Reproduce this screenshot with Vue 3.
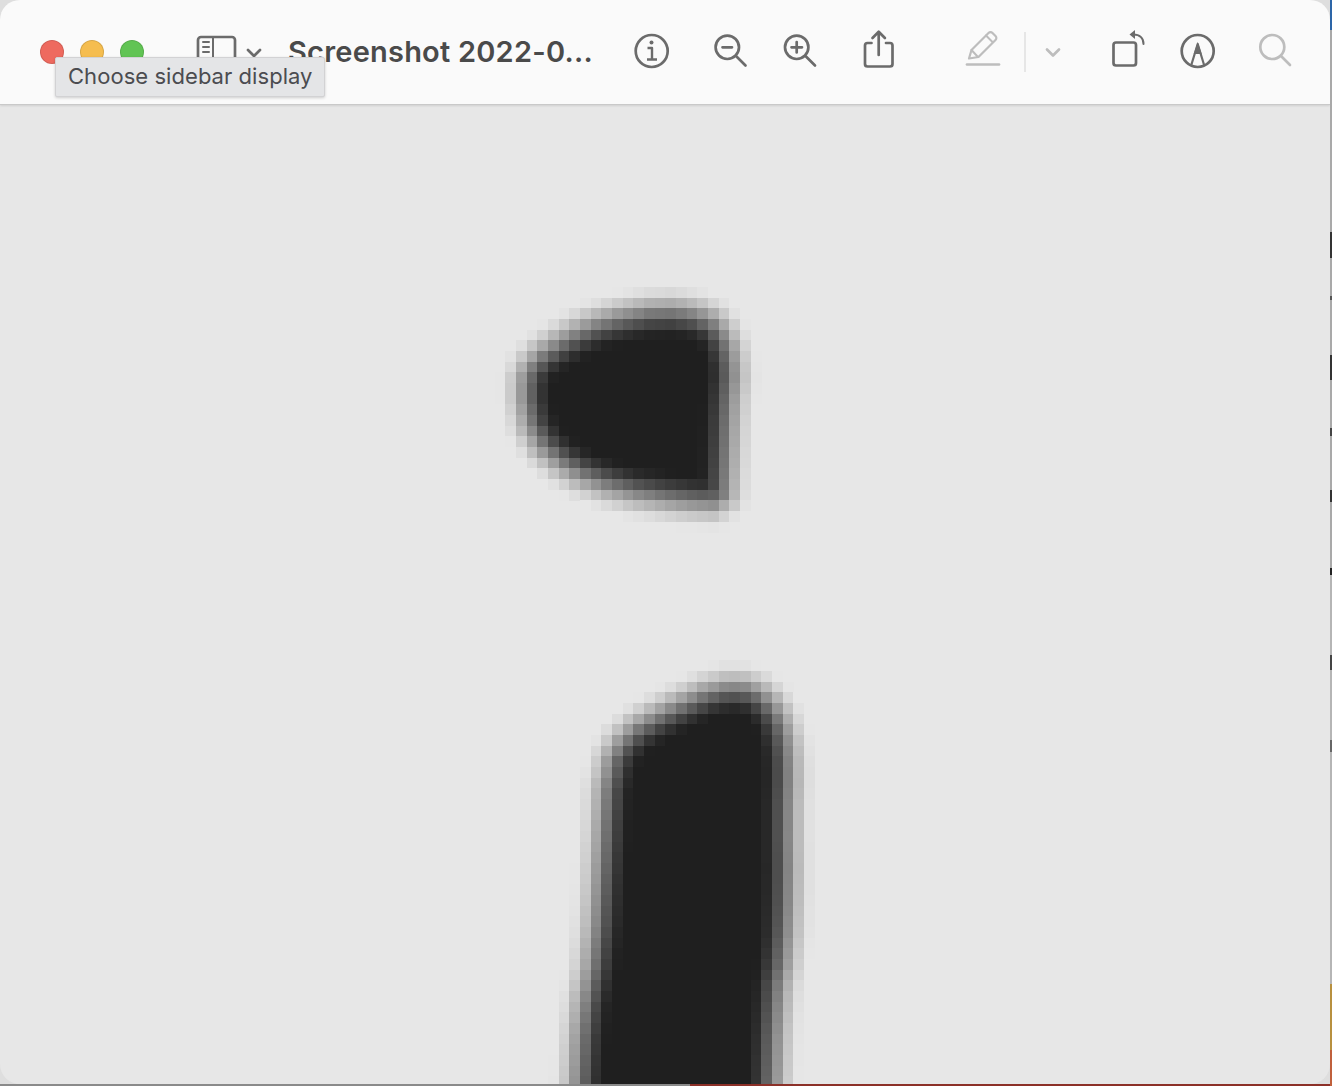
<template>
  <div class="desktop">
    <main class="window">
      <header class="toolbar">
        <div class="lights">
          <span class="light red"></span>
          <span class="light yellow"></span>
          <span class="light green"></span>
        </div>

        <svg class="icon sidebar" width="76" height="48" viewBox="192 28 76 48">
          <rect x="198" y="37" width="37" height="30" rx="3" />
          <path d="M213 37v30M203 42h6M203 47h6M203 52h6" stroke-width="2" />
          <path d="M248 50l6 6 6-6" />
        </svg>

        <h1 class="title">Screenshot 2022-0...</h1>

        <svg class="icon info" width="44" height="48" viewBox="630 28 44 48">
          <circle cx="651.7" cy="51" r="16" />
          <path d="M647.5 48h4.500v11M647 59.500h10" stroke-width="2.400" stroke-linecap="butt" />
          <circle class="solid" cx="651.500" cy="42.500" r="2" />
        </svg>

        <svg class="icon zoom-out" width="40" height="48" viewBox="712 28 40 48">
          <circle cx="727.300" cy="47.300" r="11.700" />
          <path d="M736.500 56.500l9 9M722.500 47.300h9.500" />
        </svg>

        <svg class="icon zoom-in" width="40" height="48" viewBox="782 28 40 48">
          <circle cx="796.700" cy="47.300" r="11.700" />
          <path d="M806 56.500l9 9M791.500 47.300h10.500M796.700 42v10.500" />
        </svg>

        <svg class="icon share" width="38" height="48" viewBox="860 28 38 48">
          <path d="M871.500 43h-4a2.500 2.500 0 0 0-2.500 2.500v18.500a2.500 2.500 0 0 0 2.500 2.500h22.500a2.500 2.500 0 0 0 2.500-2.500v-18.500a2.500 2.500 0 0 0-2.500-2.500h-4" />
          <path d="M878.700 55V32M872.500 38l6.200-6.200 6.200 6.200" />
        </svg>

        <svg class="icon off pencil" width="46" height="48" viewBox="960 28 46 48">
          <path d="M967 64.500h32" />
          <path d="M969 58.500l2.500-8.500 17-17a2.800 2.800 0 0 1 4 0l3 3a2.800 2.800 0 0 1 0 4l-17 17z" stroke-width="2.200" />
          <path d="M971.500 50l6 6.500M986 35.500l6.500 6.500" stroke-width="2" />
        </svg>

        <svg class="icon off markup-menu" width="44" height="48" viewBox="1020 28 44 48">
          <path class="rule" d="M1025 32v40" />
          <path d="M1047 49.500l6 6 6-6" />
        </svg>

        <svg class="icon rotate" width="40" height="48" viewBox="1108 28 40 48">
          <rect x="1113.500" y="42.500" width="22.500" height="23" rx="2.500" />
          <path d="M1143.500 44c0-6-4-9.500-10-9.500" stroke-width="2" />
          <path class="solid" d="M1129.500 34.500l5.500-4.500v9z" />
        </svg>

        <svg class="icon markup" width="44" height="48" viewBox="1176 28 44 48">
          <circle cx="1197.700" cy="51" r="16" />
          <path d="M1191 66l6.700-22 6.700 22" stroke-width="2.200" stroke-linecap="butt" />
          <path class="solid" d="M1197.700 42l4 12h-8z" />
        </svg>

        <svg class="icon off search" width="40" height="48" viewBox="1256 28 40 48">
          <circle cx="1272.300" cy="47" r="12" />
          <path d="M1281.500 56.500l8.500 8.500" />
        </svg>

        <div class="tooltip">Choose sidebar display</div>
      </header>

      <svg class="picture" width="1330" height="980" viewBox="0 104 1330 980" shape-rendering="crispEdges">
        <rect
          v-for="cell in cells"
          :key="cell.key"
          :x="cell.x"
          :y="cell.y"
          width="11"
          height="11"
          :fill="cell.fill"
        />
      </svg>
    </main>
  </div>
</template>

<script setup>
// the document is a heavily enlarged letter "i", so it is drawn as big soft pixels
const dot = smooth([
  [663, 308], [708, 316], [726, 337], [733, 370], [729, 403], [726, 470], [724, 503],
  [680, 500], [620, 490], [570, 470], [533, 437], [523, 387], [533, 360], [567, 337], [603, 320],
]);
const stem = smooth([
  [720, 686], [753, 688], [775, 708], [785, 733], [789, 767], [787, 817], [788, 883],
  [785, 950], [776, 1000], [771, 1130], [575, 1130], [578, 1080], [582, 1017], [595, 950],
  [602, 850], [607, 767], [627, 733], [663, 712],
]);

// rounds the corners of a closed outline
function smooth(points) {
  const out = [];
  points.forEach(([ax, ay], i) => {
    const [bx, by] = points[(i + 1) % points.length];
    out.push([ax * 0.75 + bx * 0.25, ay * 0.75 + by * 0.25]);
    out.push([ax * 0.25 + bx * 0.75, ay * 0.25 + by * 0.75]);
  });
  return out;
}

// signed distance to a polygon, negative inside
function distance(px, py, poly) {
  let best = Infinity;
  let inside = false;
  for (let i = 0, j = poly.length - 1; i < poly.length; j = i++) {
    const [ax, ay] = poly[i];
    const [bx, by] = poly[j];
    const dx = bx - ax;
    const dy = by - ay;
    const t = Math.max(0, Math.min(1, ((px - ax) * dx + (py - ay) * dy) / (dx * dx + dy * dy)));
    best = Math.min(best, Math.hypot(px - ax - t * dx, py - ay - t * dy));
    if (ay > py !== by > py && px < ax + ((py - ay) / dy) * dx) inside = !inside;
  }
  return inside ? -best : best;
}

function shade(d) {
  const t = Math.max(0, Math.min(1, (d + 28) / 56));
  const soft = t * t * (3 - 2 * t);
  const level = Math.round(31 + (231 - 31) * soft);
  return `rgb(${level},${level},${level})`;
}

const size = 32 / 3;
const cells = [];
for (let row = 0; row < 76; row++) {
  for (let col = 0; col < 34; col++) {
    const x = 473.3 + col * size;
    const y = 275.4 + row * size;
    const d = Math.min(distance(x + size / 2, y + size / 2, dot), distance(x + size / 2, y + size / 2, stem));
    if (d < 30) cells.push({ key: row + "-" + col, x, y, fill: shade(d) });
  }
}
</script>

<style>
html,
body {
  margin: 0;
  overflow: hidden;
}
</style>

<style scoped>
.desktop {
  width: 1332px;
  height: 1086px;
  overflow: hidden;
  background:
    linear-gradient(#2d66a8 0 30px, #a9a9a9 30px 232px, #333 232px 258px, #a9a9a9 258px 296px, #555 296px 300px,
      #a9a9a9 300px 355px, #333 355px 380px, #a9a9a9 380px 428px, #444 428px 436px, #a9a9a9 436px 490px, #333 490px 502px,
      #a9a9a9 502px 568px, #222 568px 575px, #b5b5b5 575px 655px, #444 655px 670px, #b5b5b5 670px 740px, #666 740px 752px,
      #b5b5b5 752px 984px, #b8903f 984px 1050px, #c0603c 1050px) right top / 2px 100% no-repeat,
    linear-gradient(90deg, #8a8a8a 0 690px, #8c3028 690px) left bottom / 100% 2px no-repeat,
    #dedede;
}

.window {
  width: 1330px;
  height: 1084px;
  border-radius: 20px;
  overflow: hidden;
  background: #e7e7e7;
}

.toolbar {
  position: relative;
  display: flex;
  align-items: center;
  box-sizing: border-box;
  height: 105px;
  padding-left: 40px;
  background: #fafafa;
  border-bottom: 1px solid #c9c9c9;
  box-shadow: 0 1px 2px rgba(0, 0, 0, 0.1);
}

.lights {
  display: flex;
  gap: 16px;
}

.light {
  width: 24px;
  height: 24px;
  box-sizing: border-box;
  border-radius: 50%;
  border: 1px solid rgba(0, 0, 0, 0.12);
}

.red {
  background: #ee6a5f;
}

.yellow {
  background: #f5bd4f;
}

.green {
  background: #61c454;
}

.icon {
  flex: none;
  fill: none;
  stroke: #6b6b6b;
  stroke-width: 2.700;
  stroke-linecap: round;
  stroke-linejoin: round;
}

.icon.off {
  stroke: #bdbdbd;
}

.icon .solid {
  fill: #6b6b6b;
  stroke: none;
}

.icon .rule {
  stroke: #e6e6e6;
  stroke-width: 2;
  stroke-linecap: butt;
}

.sidebar {
  margin-left: 48px;
}

.title {
  width: 304px;
  margin: -2px 0 0 20px;
  white-space: nowrap;
  font: 600 29px "Inter", "Liberation Sans", sans-serif;
  letter-spacing: 0.22px;
  color: #4a4a4a;
}

.info {
  margin-left: 38px;
}

.zoom-out {
  margin-left: 38px;
}

.zoom-in {
  margin-left: 30px;
}

.share {
  margin-left: 38px;
}

.pencil {
  margin-left: 62px;
}

.markup-menu {
  margin-left: 14px;
}

.rotate {
  margin-left: 44px;
}

.markup {
  margin-left: 28px;
}

.search {
  margin-left: 36px;
}

.tooltip {
  position: absolute;
  left: 55px;
  top: 57px;
  width: 270px;
  height: 40px;
  box-sizing: border-box;
  padding-left: 12px;
  font: 400 22px/36px "Inter", "Liberation Sans", sans-serif;
  letter-spacing: 0.05px;
  white-space: nowrap;
  color: #4b4c50;
  background: #e4e5e7;
  border: 1px solid #d2d2d4;
  border-radius: 2px;
  box-shadow: 0 1px 3px rgba(0, 0, 0, 0.18);
}

.picture {
  display: block;
}
</style>
